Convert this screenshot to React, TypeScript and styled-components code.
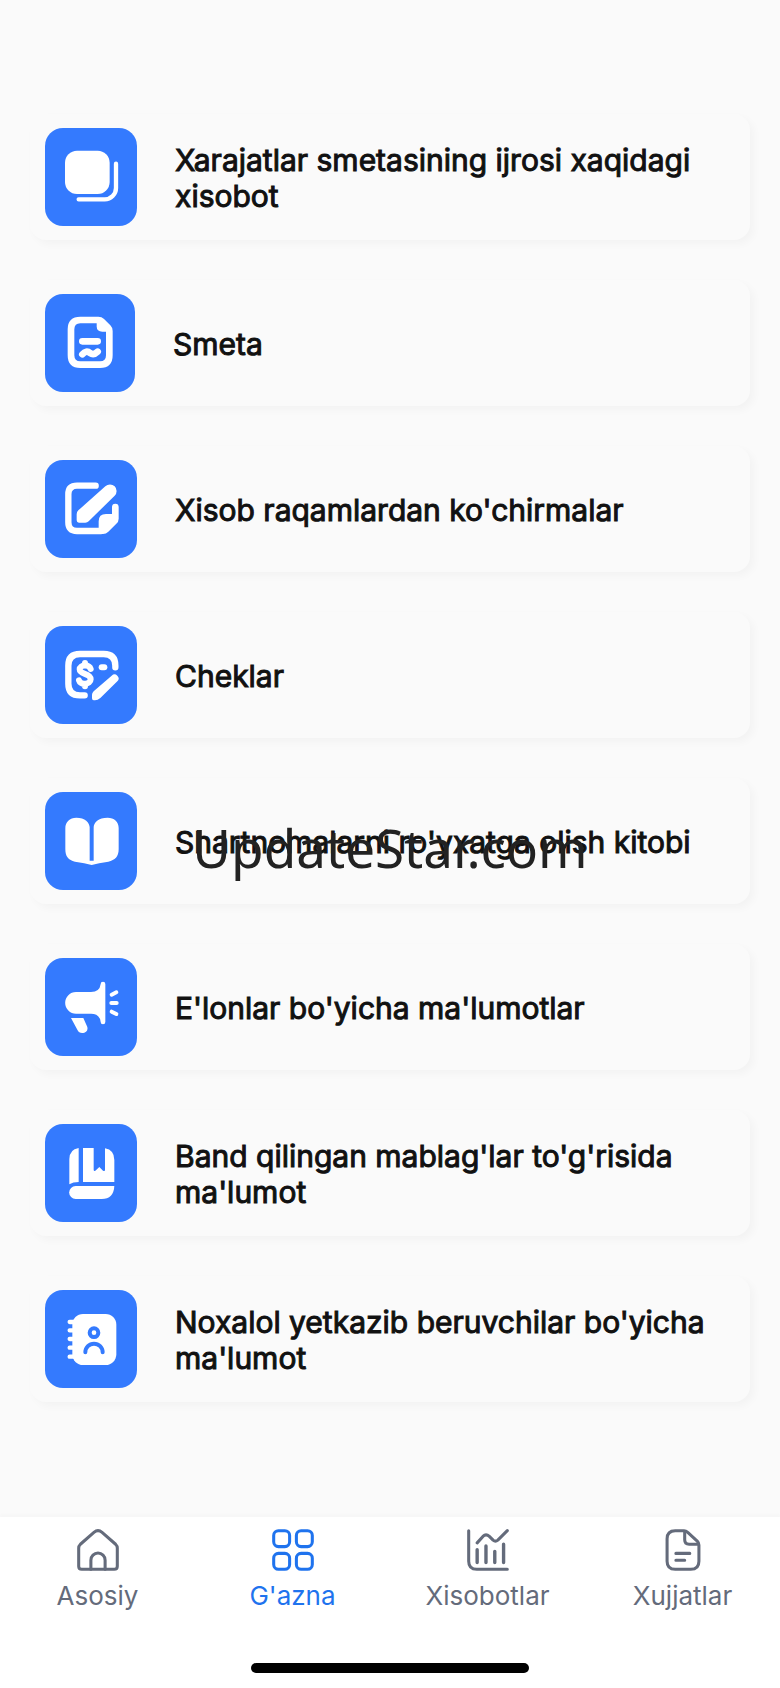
import React from 'react';
import styled, { createGlobalStyle } from 'styled-components';

const GlobalStyle = createGlobalStyle`
  * { box-sizing: border-box; }
  body {
    margin: 0;
    background: #fafafa;
    font-family: Inter, "Liberation Sans", sans-serif;
  }
`;

const Screen = styled.div`
  position: relative;
  display: flex;
  flex-direction: column;
  min-height: 100vh;
  background: #fafafa;
`;

const Menu = styled.main`
  flex: 1;
  display: flex;
  flex-direction: column;
  gap: 40px;
  padding: 114px 30px 40px;
`;

const Card = styled.button`
  display: flex;
  align-items: center;
  gap: 38px;
  width: 100%;
  padding: 14px 15px;
  border: 0;
  border-radius: 16px;
  background: #fafafa;
  box-shadow: 4px 4px 8px rgba(0, 0, 0, 0.03);
  font: inherit;
  text-align: left;
  cursor: pointer;
`;

const Tile = styled.span<{ $width: number }>`
  flex: none;
  display: flex;
  width: ${(p) => p.$width}px;
  height: 98px;
  border-radius: 18px;
  background: #347afe;
  color: #ffffff;

  svg {
    width: 100%;
    height: 100%;
  }
`;

const CardTitle = styled.span`
  flex: 1;
  padding-top: 2px;
  color: #111111;
  font-size: 30px;
  font-weight: 400;
  line-height: 36px;
  -webkit-text-stroke: 1px #111111;
`;

const Watermark = styled.div`
  position: absolute;
  top: 50%;
  left: 50%;
  transform: translate(-50%, -50%);
  padding-top: 8px;
  color: #222222;
  font-family: "Noto Sans", "Open Sans", sans-serif;
  font-size: 53px;
  line-height: 72px;
  white-space: nowrap;
  pointer-events: none;
`;

const BottomBar = styled.footer`
  display: flex;
  flex-direction: column;
  align-items: center;
  gap: 50px;
  padding: 12px 0 15px;
  background: #ffffff;
  box-shadow: 0 -3px 3px rgba(0, 0, 0, 0.015);
`;

const Tabs = styled.nav`
  display: grid;
  grid-template-columns: repeat(4, 1fr);
  width: 100%;
`;

const Tab = styled.a<{ $active?: boolean }>`
  display: flex;
  flex-direction: column;
  align-items: center;
  gap: 8px;
  color: ${(p) => (p.$active ? '#1f73ee' : '#646b7b')};
  font-size: 26px;
  line-height: 34px;
  text-decoration: none;

  svg {
    width: 42px;
    height: 42px;
  }
`;

const HomeIndicator = styled.div`
  width: 278px;
  height: 10px;
  border-radius: 5px;
  background: #000000;
`;

const TileIcon = ({ width = 276, children }: { width?: number; children: React.ReactNode }) => (
  <svg viewBox={`0 0 ${width} 294`} fill="none" strokeLinecap="round" strokeLinejoin="round" aria-hidden="true">
    {children}
  </svg>
);

const TabIcon = ({ children }: { children: React.ReactNode }) => (
  <svg viewBox="0 0 124 124" fill="none" stroke="currentColor" strokeWidth="9" strokeLinecap="round" strokeLinejoin="round" aria-hidden="true">
    {children}
  </svg>
);

const items = [
  {
    title: 'Xarajatlar smetasining ijrosi xaqidagi xisobot',
    icon: (
      <TileIcon>
        <rect x="60" y="68" width="134" height="130" rx="36" fill="currentColor" />
        <path d="M213 107V180a34 34 0 0 1-34 34H101" stroke="currentColor" strokeWidth="13" />
      </TileIcon>
    ),
  },
  {
    title: 'Smeta',
    width: 90,
    icon: (
      <TileIcon width={270}>
        <path d="M106 78H160Q166 78 170 82L189 101Q193 105 193 111V184Q193 212 165 212H106Q78 212 78 184V106Q78 78 106 78Z" stroke="currentColor" strokeWidth="20" />
        <path d="M155 78L193 113H172Q155 113 155 97Z" fill="currentColor" />
        <path d="M112 142H158M112 181q12-14 23-4q11 8 23-4" stroke="currentColor" strokeWidth="20" />
      </TileIcon>
    ),
  },
  {
    title: "Xisob raqamlardan ko'chirmalar",
    icon: (
      <TileIcon>
        <path d="M152 77H96Q70 77 70 103V187Q70 213 96 213H168" stroke="currentColor" strokeWidth="19" />
        <path d="M161 222V184Q161 162 183 162H201V141A10 10 0 0 1 221 141V176Q221 185 214 191L190 215Q183 222 174 222Z" fill="currentColor" />
        <path d="M102 188Q95 188 95 181V163Q95 156 100 151L181 79A19 19 0 0 1 209 107L131 184Q127 188 121 188Z" fill="currentColor" />
      </TileIcon>
    ),
  },
  {
    title: 'Cheklar',
    icon: (
      <TileIcon>
        <path d="M119 208H105Q70 208 70 173V119Q70 84 105 84H176Q211 84 211 119V124" stroke="currentColor" strokeWidth="19" />
        <path d="M137 129C132 114 104 116 104 130C104 147 137 140 137 160C137 176 107 178 102 163M120 111V118M120 174V181" stroke="currentColor" strokeWidth="18" />
        <path d="M170 124H178" stroke="currentColor" strokeWidth="18" />
        <path d="M146 223Q141 223 141 217V206Q141 201 146 196L200 149A12 12 0 0 1 217 166L166 216Q158 223 150 223Z" fill="currentColor" />
      </TileIcon>
    ),
  },
  {
    title: "Shartnomalarni ro'yxatga olish kitobi",
    icon: (
      <TileIcon>
        <path d="M61 108C61 90 74 77 94 77C120 77 134 92 134 106V206H146V106C146 92 160 77 188 77C207 77 221 88 221 108V172C221 194 210 205 190 209Q160 213 140 219Q120 213 90 209C70 204 61 194 61 172Z" fill="currentColor" />
      </TileIcon>
    ),
  },
  {
    title: "E'lonlar bo'yicha ma'lumotlar",
    icon: (
      <TileIcon>
        <path d="M93 102H138Q164 102 167 78A7 7 0 0 1 181 78V192A7 7 0 0 1 167 192Q164 167 138 167H93A32 32 0 0 1 93 102Z" fill="currentColor" />
        <path d="M78 180H115L127 207Q130 219 118 224Q103 228 97 215Z" fill="currentColor" />
        <path d="M200 110L214 103M199 135H215M200 161L214 168" stroke="currentColor" strokeWidth="12" />
      </TileIcon>
    ),
  },
  {
    title: "Band qilingan mablag'lar to'g'risida ma'lumot",
    icon: (
      <TileIcon>
        <path d="M101 72V174Q84 174 73 181V106Q73 76 101 72Z" fill="currentColor" />
        <path d="M114 72H146V138Q147 143 151 140L163 129L174 140Q180 143 180 138V73Q208 78 208 108V174H114Z" fill="currentColor" />
        <path d="M92 186H208Q206 225 170 225H92A19 19 0 0 1 92 186Z" fill="currentColor" />
      </TileIcon>
    ),
  },
  {
    title: "Noxalol yetkazib beruvchilar bo'yicha ma'lumot",
    icon: (
      <TileIcon>
        <rect x="82" y="72" width="132" height="153" rx="32" fill="currentColor" />
        <path d="M74 96H92M74 121H86M74 147H86M74 173H86M74 200H92" stroke="currentColor" strokeWidth="13" />
        <g stroke="#347afe" strokeWidth="12">
          <circle cx="147" cy="128" r="13" />
          <path d="M121 187A26 26 0 0 1 173 187" />
        </g>
      </TileIcon>
    ),
  },
];

const tabs = [
  {
    label: 'Asosiy',
    icon: (
      <TabIcon>
        <path d="M5 110V56Q5 50 10 45L50 10Q62 0 74 10L114 45Q119 50 119 56V110Q119 119 110 119H14Q5 119 5 110Z" />
        <path d="M41 119V92A21 21 0 0 1 83 92V119" />
      </TabIcon>
    ),
  },
  {
    label: "G'azna",
    active: true,
    icon: (
      <TabIcon>
        <rect x="5" y="5" width="47" height="47" rx="14" />
        <rect x="72" y="5" width="47" height="47" rx="14" />
        <rect x="5" y="72" width="47" height="47" rx="14" />
        <rect x="72" y="72" width="47" height="47" rx="14" />
      </TabIcon>
    ),
  },
  {
    label: 'Xisobotlar',
    icon: (
      <TabIcon>
        <path d="M5 5V95Q5 119 29 119H119" />
        <path d="M30 41L47 22Q56 13 66 22L77 33Q84 39 91 33L119 5" />
        <path d="M30 61V99M56 50V99M82 66V99M108 45V99" strokeWidth="10" />
      </TabIcon>
    ),
  },
  {
    label: 'Xujjatlar',
    icon: (
      <TabIcon>
        <path d="M39 5H64Q71 5 76 10L104 36Q109 41 109 47V95Q109 119 85 119H39Q15 119 15 95V29Q15 5 39 5Z" />
        <path d="M67 7V32Q67 45 80 45H107M41 72H82M41 92H67" />
      </TabIcon>
    ),
  },
];

export default function App() {
  return (
    <Screen>
      <GlobalStyle />
      <Menu>
        {items.map((item) => (
          <Card key={item.title} type="button">
            <Tile $width={item.width ?? 92}>{item.icon}</Tile>
            <CardTitle>{item.title}</CardTitle>
          </Card>
        ))}
      </Menu>
      <BottomBar>
        <Tabs>
          {tabs.map((tab) => (
            <Tab key={tab.label} href="#" $active={tab.active} aria-current={tab.active ? 'page' : undefined}>
              {tab.icon}
              {tab.label}
            </Tab>
          ))}
        </Tabs>
        <HomeIndicator />
      </BottomBar>
      <Watermark>UpdateStar.com</Watermark>
    </Screen>
  );
}
